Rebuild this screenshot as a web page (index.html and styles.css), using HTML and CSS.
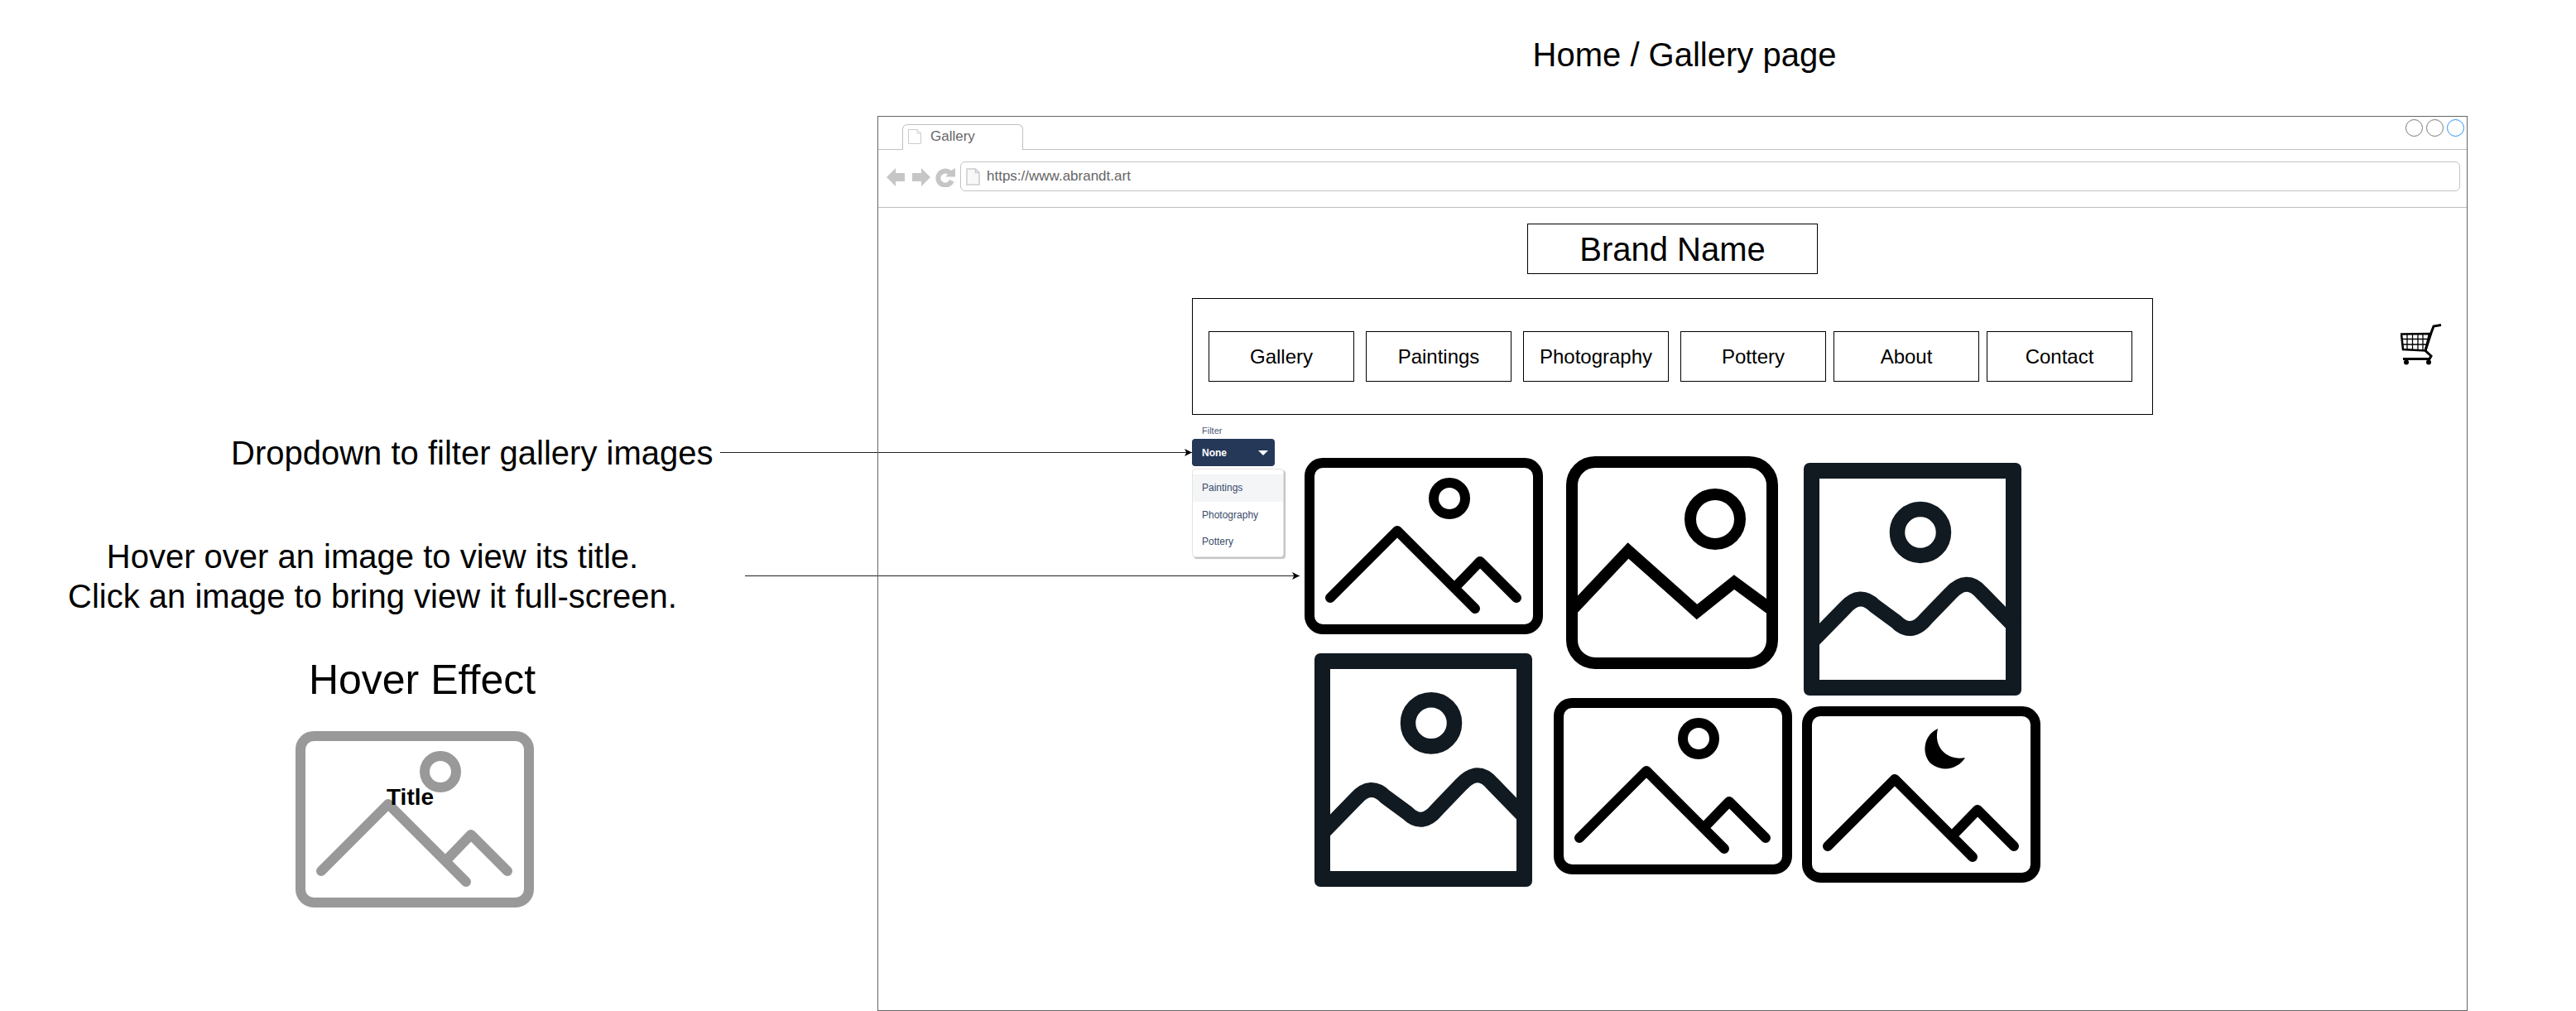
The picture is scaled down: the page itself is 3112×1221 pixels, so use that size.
FILE: index.html
```html
<!DOCTYPE html>
<html lang="en">
<head>
<meta charset="utf-8">
<title>Home / Gallery page</title>
<link rel="stylesheet" href="styles.css">
</head>
<body>

<svg class="defs" width="0" height="0">
    <symbol id="pic_wide" viewBox="0 0 288 213" preserveAspectRatio="none">
        <rect x="6" y="6" width="276" height="201" rx="16" fill="none" stroke="currentColor" stroke-width="12"/>
        <path d="M31 169 L112 88 L206 182 M183 155 L212 125 L256 169" fill="none" stroke="currentColor" stroke-width="12" stroke-linecap="round" stroke-linejoin="round"/>
        <circle cx="175" cy="49" r="19" fill="none" stroke="currentColor" stroke-width="12"/>
    </symbol>
    <symbol id="pic_moon" viewBox="0 0 288 213" preserveAspectRatio="none">
        <rect x="6" y="6" width="276" height="201" rx="16" fill="none" stroke="currentColor" stroke-width="12"/>
        <path d="M31 169 L112 88 L206 182 M183 155 L212 125 L256 169" fill="none" stroke="currentColor" stroke-width="12" stroke-linecap="round" stroke-linejoin="round"/>
        <path d="M164 27 C144 36 144 64 160 72 C174 80 191 73 197 62 C178 66 158 52 164 27 Z" fill="currentColor"/>
    </symbol>
    <symbol id="pic_tall" viewBox="0 0 256 257" preserveAspectRatio="none">
        <rect x="7" y="7" width="242" height="243" rx="28" fill="none" stroke="currentColor" stroke-width="14"/>
        <path d="M7 186 L75 114 L158 188 L203 152 L249 186" fill="none" stroke="currentColor" stroke-width="14"/>
        <circle cx="180" cy="76" r="30" fill="none" stroke="currentColor" stroke-width="14"/>
    </symbol>
    <symbol id="pic_frame" viewBox="0 0 263 281" preserveAspectRatio="none">
        <path fill-rule="evenodd" d="M7 0 H256 A7 7 0 0 1 263 7 V274 A7 7 0 0 1 256 281 H7 A7 7 0 0 1 0 274 V7 A7 7 0 0 1 7 0 Z M19 19 V262 H244 V19 Z" fill="currentColor"/>
        <path d="M9 217 L50 175 Q68 155 86 173 L112 192 Q130 210 148 188 L177 158 Q197 136 215 157 L253 196" fill="none" stroke="currentColor" stroke-width="18"/>
        <circle cx="141" cy="84" r="28" fill="none" stroke="currentColor" stroke-width="18.500"/>
    </symbol>
</svg>

<div class="canvas">

    <h1 class="page_title">Home / Gallery page</h1>

    <p class="note note_filter">Dropdown to filter gallery images</p>
    <div class="arrow arrow_filter"></div>

    <p class="note note_hover">Hover over an image to view its title.<br>Click an image to bring view it full-screen.</p>
    <div class="arrow arrow_hover"></div>

    <h2 class="hover_title">Hover Effect</h2>
    <div class="hover_demo">
        <svg class="pic_full"><use href="#pic_wide"/></svg>
        <span class="hover_label">Title</span>
    </div>

    <div class="window">
        <div class="tab_row">
            <div class="tab">
                <svg class="page_icon" viewBox="0 0 16 18"><path d="M.5.500H11L15.500 5V17.500H.5Z M11 .5V5H15.500" fill="#fff" stroke="#ccc"/></svg>
                <span>Gallery</span>
            </div>
            <div class="win_btns">
                <span class="win_btn"></span>
                <span class="win_btn"></span>
                <span class="win_btn win_btn_blue"></span>
            </div>
        </div>

        <div class="address_row">
            <svg class="nav_icons" viewBox="0 0 84 23">
                <path d="M0 11 L11 0 V6 H22 V16 H11 V22 Z" fill="#c6c6c6"/>
                <path d="M31 6 H42 V0 L53 11 L42 22 V16 H31 Z" fill="#c6c6c6"/>
                <path d="M78 3 A11.500 11.500 0 1 0 81.500 16.500 L76 14 A5.500 5.500 0 1 1 74 7.500 L71 10.500 H83 V0 Z" fill="#c6c6c6"/>
            </svg>
            <div class="address">
                <svg class="url_icon" viewBox="0 0 17 21"><path d="M1 1H11.500L16 5.500V20H1Z M11.500 1V5.500H16" fill="#f8f8f8" stroke="#ccc" stroke-width="1.500"/></svg>
                <span>https://www.abrandt.art</span>
            </div>
        </div>

        <div class="brand">Brand Name</div>

        <nav class="nav">
            <a class="nav_item">Gallery</a>
            <a class="nav_item">Paintings</a>
            <a class="nav_item">Photography</a>
            <a class="nav_item">Pottery</a>
            <a class="nav_item nav_item_close">About</a>
            <a class="nav_item nav_item_close">Contact</a>
        </nav>

        <svg class="cart" viewBox="0 0 50 50">
            <path d="M1 12.500 L35 12 L30 32.500 L3 31 Z" fill="none" stroke="#000" stroke-width="2.500"/>
            <path d="M2 18.500 H33 M2.500 25 H32 M8 12 V32 M14.500 12 V32 M21 12 V32 M27 12 V32" fill="none" stroke="#000" stroke-width="1.300"/>
            <path d="M30 32.500 L37 11 L40 3 L49 1.500 M30 32.500 L37 39 L35 42.500 M3 42.500 H36" fill="none" stroke="#000" stroke-width="3"/>
            <circle cx="7" cy="46.500" r="3"/>
            <circle cx="34" cy="46.500" r="3"/>
        </svg>

        <div class="filter">
            <label class="filter_label">Filter</label>
            <div class="filter_btn"><b>None</b><span class="caret"></span></div>
            <ul class="filter_menu">
                <li class="filter_item filter_item_on">Paintings</li>
                <li class="filter_item">Photography</li>
                <li class="filter_item">Pottery</li>
            </ul>
        </div>

        <svg class="pic pic1"><use href="#pic_wide"/></svg>
        <svg class="pic pic2"><use href="#pic_tall"/></svg>
        <svg class="pic pic3"><use href="#pic_frame"/></svg>
        <svg class="pic pic4"><use href="#pic_frame"/></svg>
        <svg class="pic pic5"><use href="#pic_wide"/></svg>
        <svg class="pic pic6"><use href="#pic_moon"/></svg>
    </div>
</div>

</body>
</html>
```

FILE: styles.css
```css
html, body
{
margin: 0;
padding: 0;
background: #fff;
}

body
{
font-family: "Liberation Sans", Arial, sans-serif;
color: #000;
overflow: hidden;
}

.defs
{
position: absolute;
}

.canvas
{
position: relative;
width: 3112px;
height: 1221px;
overflow: hidden;
}

.page_title
{
position: absolute;
left: 1700px;
top: 42px;
width: 670px;
margin: 0;
font-size: 40px;
line-height: 48px;
font-weight: normal;
text-align: center;
}

.note
{
position: absolute;
margin: 0;
font-size: 40px;
line-height: 48px;
}

.note_filter
{
left: 279px;
top: 523px;
}

.note_hover
{
left: 50px;
top: 648px;
width: 800px;
text-align: center;
}

.arrow
{
position: absolute;
height: 1px;
background: #222;
}

.arrow::after
{
content: "";
position: absolute;
right: 0;
top: -4px;
width: 9px;
height: 9px;
background: #000;
clip-path: polygon(0 0, 100% 50%, 0 100%, 25% 50%);
}

.arrow_filter
{
left: 870px;
top: 546px;
width: 570px;
}

.arrow_hover
{
left: 900px;
top: 695px;
width: 670px;
}

.hover_title
{
position: absolute;
left: 310px;
top: 792px;
width: 400px;
margin: 0;
font-size: 50px;
line-height: 58px;
font-weight: normal;
text-align: center;
}

.hover_demo
{
position: absolute;
left: 357px;
top: 883px;
width: 288px;
height: 213px;
color: #999;
}

.pic_full
{
display: block;
width: 100%;
height: 100%;
}

.hover_label
{
position: absolute;
left: 110px;
top: 63px;
font-size: 28px;
line-height: 34px;
font-weight: bold;
color: #000;
}

.window
{
position: absolute;
left: 1060px;
top: 140px;
width: 1921px;
height: 1081px;
box-sizing: border-box;
border: 1px solid #666;
}

.tab_row
{
display: flex;
justify-content: space-between;
height: 40px;
border-bottom: 1px solid #c0c0c0;
box-sizing: border-box;
}

.tab
{
display: flex;
align-items: center;
gap: 11px;
width: 146px;
height: 31px;
margin: 9px 0 0 29px;
padding: 0 0 2px 6px;
box-sizing: border-box;
background: #fff;
border: 1px solid #c0c0c0;
border-bottom: 0;
border-radius: 6px 6px 0 0;
color: #666;
font-size: 17px;
}

.page_icon
{
width: 16px;
height: 18px;
flex: none;
}

.win_btns
{
display: flex;
gap: 4px;
padding: 3px 3px 0 0;
}

.win_btn
{
width: 21px;
height: 21px;
box-sizing: border-box;
border: 1px solid #777;
border-radius: 50%;
}

.win_btn_blue
{
border-color: #2a94f4;
}

.address_row
{
display: flex;
align-items: flex-start;
gap: 5px;
height: 70px;
padding: 14px 8px 0 10px;
box-sizing: border-box;
border-bottom: 1px solid #c0c0c0;
}

.nav_icons
{
width: 84px;
height: 23px;
margin-top: 8px;
flex: none;
}

.address
{
display: flex;
align-items: center;
gap: 8px;
flex: 1;
height: 36px;
padding-left: 6px;
box-sizing: border-box;
border: 1px solid #c4c4c4;
border-radius: 6px;
color: #666;
font-size: 17px;
}

.url_icon
{
width: 17px;
height: 21px;
flex: none;
}

.brand
{
width: 351px;
height: 61px;
margin: 19px 0 0 784px;
padding-top: 2px;
box-sizing: border-box;
border: 1px solid #000;
display: flex;
align-items: center;
justify-content: center;
font-size: 40px;
}

.nav
{
display: flex;
align-items: center;
gap: 14px;
width: 1161px;
height: 141px;
margin: 29px 0 0 379px;
padding-left: 19px;
box-sizing: border-box;
border: 1px solid #000;
}

.nav_item
{
width: 176px;
height: 61px;
box-sizing: border-box;
border: 1px solid #000;
display: flex;
align-items: center;
justify-content: center;
font-size: 24px;
}

.nav_item_close
{
margin-left: -5px;
}

.cart
{
position: absolute;
left: 1839px;
top: 250px;
width: 50px;
height: 50px;
}

.filter
{
position: absolute;
left: 379px;
top: 373px;
width: 112px;
color: #253858;
}

.filter_label
{
display: block;
height: 16px;
padding-left: 12px;
font-size: 11px;
line-height: 13px;
color: #4b5a78;
}

.filter_btn
{
display: flex;
align-items: center;
justify-content: space-between;
width: 100px;
height: 33px;
padding: 0 8px 0 12px;
box-sizing: border-box;
background: #253858;
border-radius: 4px;
color: #fff;
font-size: 12px;
}

.caret
{
border-top: 6px solid #fff;
border-left: 6px solid transparent;
border-right: 6px solid transparent;
}

.filter_menu
{
list-style: none;
width: 111px;
height: 107px;
margin: 3px 0 0 0;
padding: 6px 0 0 0;
box-sizing: border-box;
border: 1px solid #e3e3e3;
border-radius: 4px;
box-shadow: 2px 2px 1px #c4c4c4;
background: #fff;
}

.filter_item
{
height: 32.500px;
line-height: 32px;
padding-left: 11px;
font-size: 12px;
color: #3a4a6b;
}

.filter_item_on
{
background: #f4f5f7;
}

.pic
{
position: absolute;
display: block;
color: #000;
}

.pic1
{
left: 515px;
top: 412px;
width: 288px;
height: 213px;
}

.pic2
{
left: 831px;
top: 410px;
width: 256px;
height: 257px;
}

.pic3
{
left: 1118px;
top: 418px;
width: 263px;
height: 281px;
color: #121a21;
}

.pic4
{
left: 527px;
top: 648px;
width: 263px;
height: 282px;
color: #121a21;
}

.pic5
{
left: 816px;
top: 702px;
width: 288px;
height: 213px;
}

.pic6
{
left: 1116px;
top: 712px;
width: 288px;
height: 213px;
}
```
